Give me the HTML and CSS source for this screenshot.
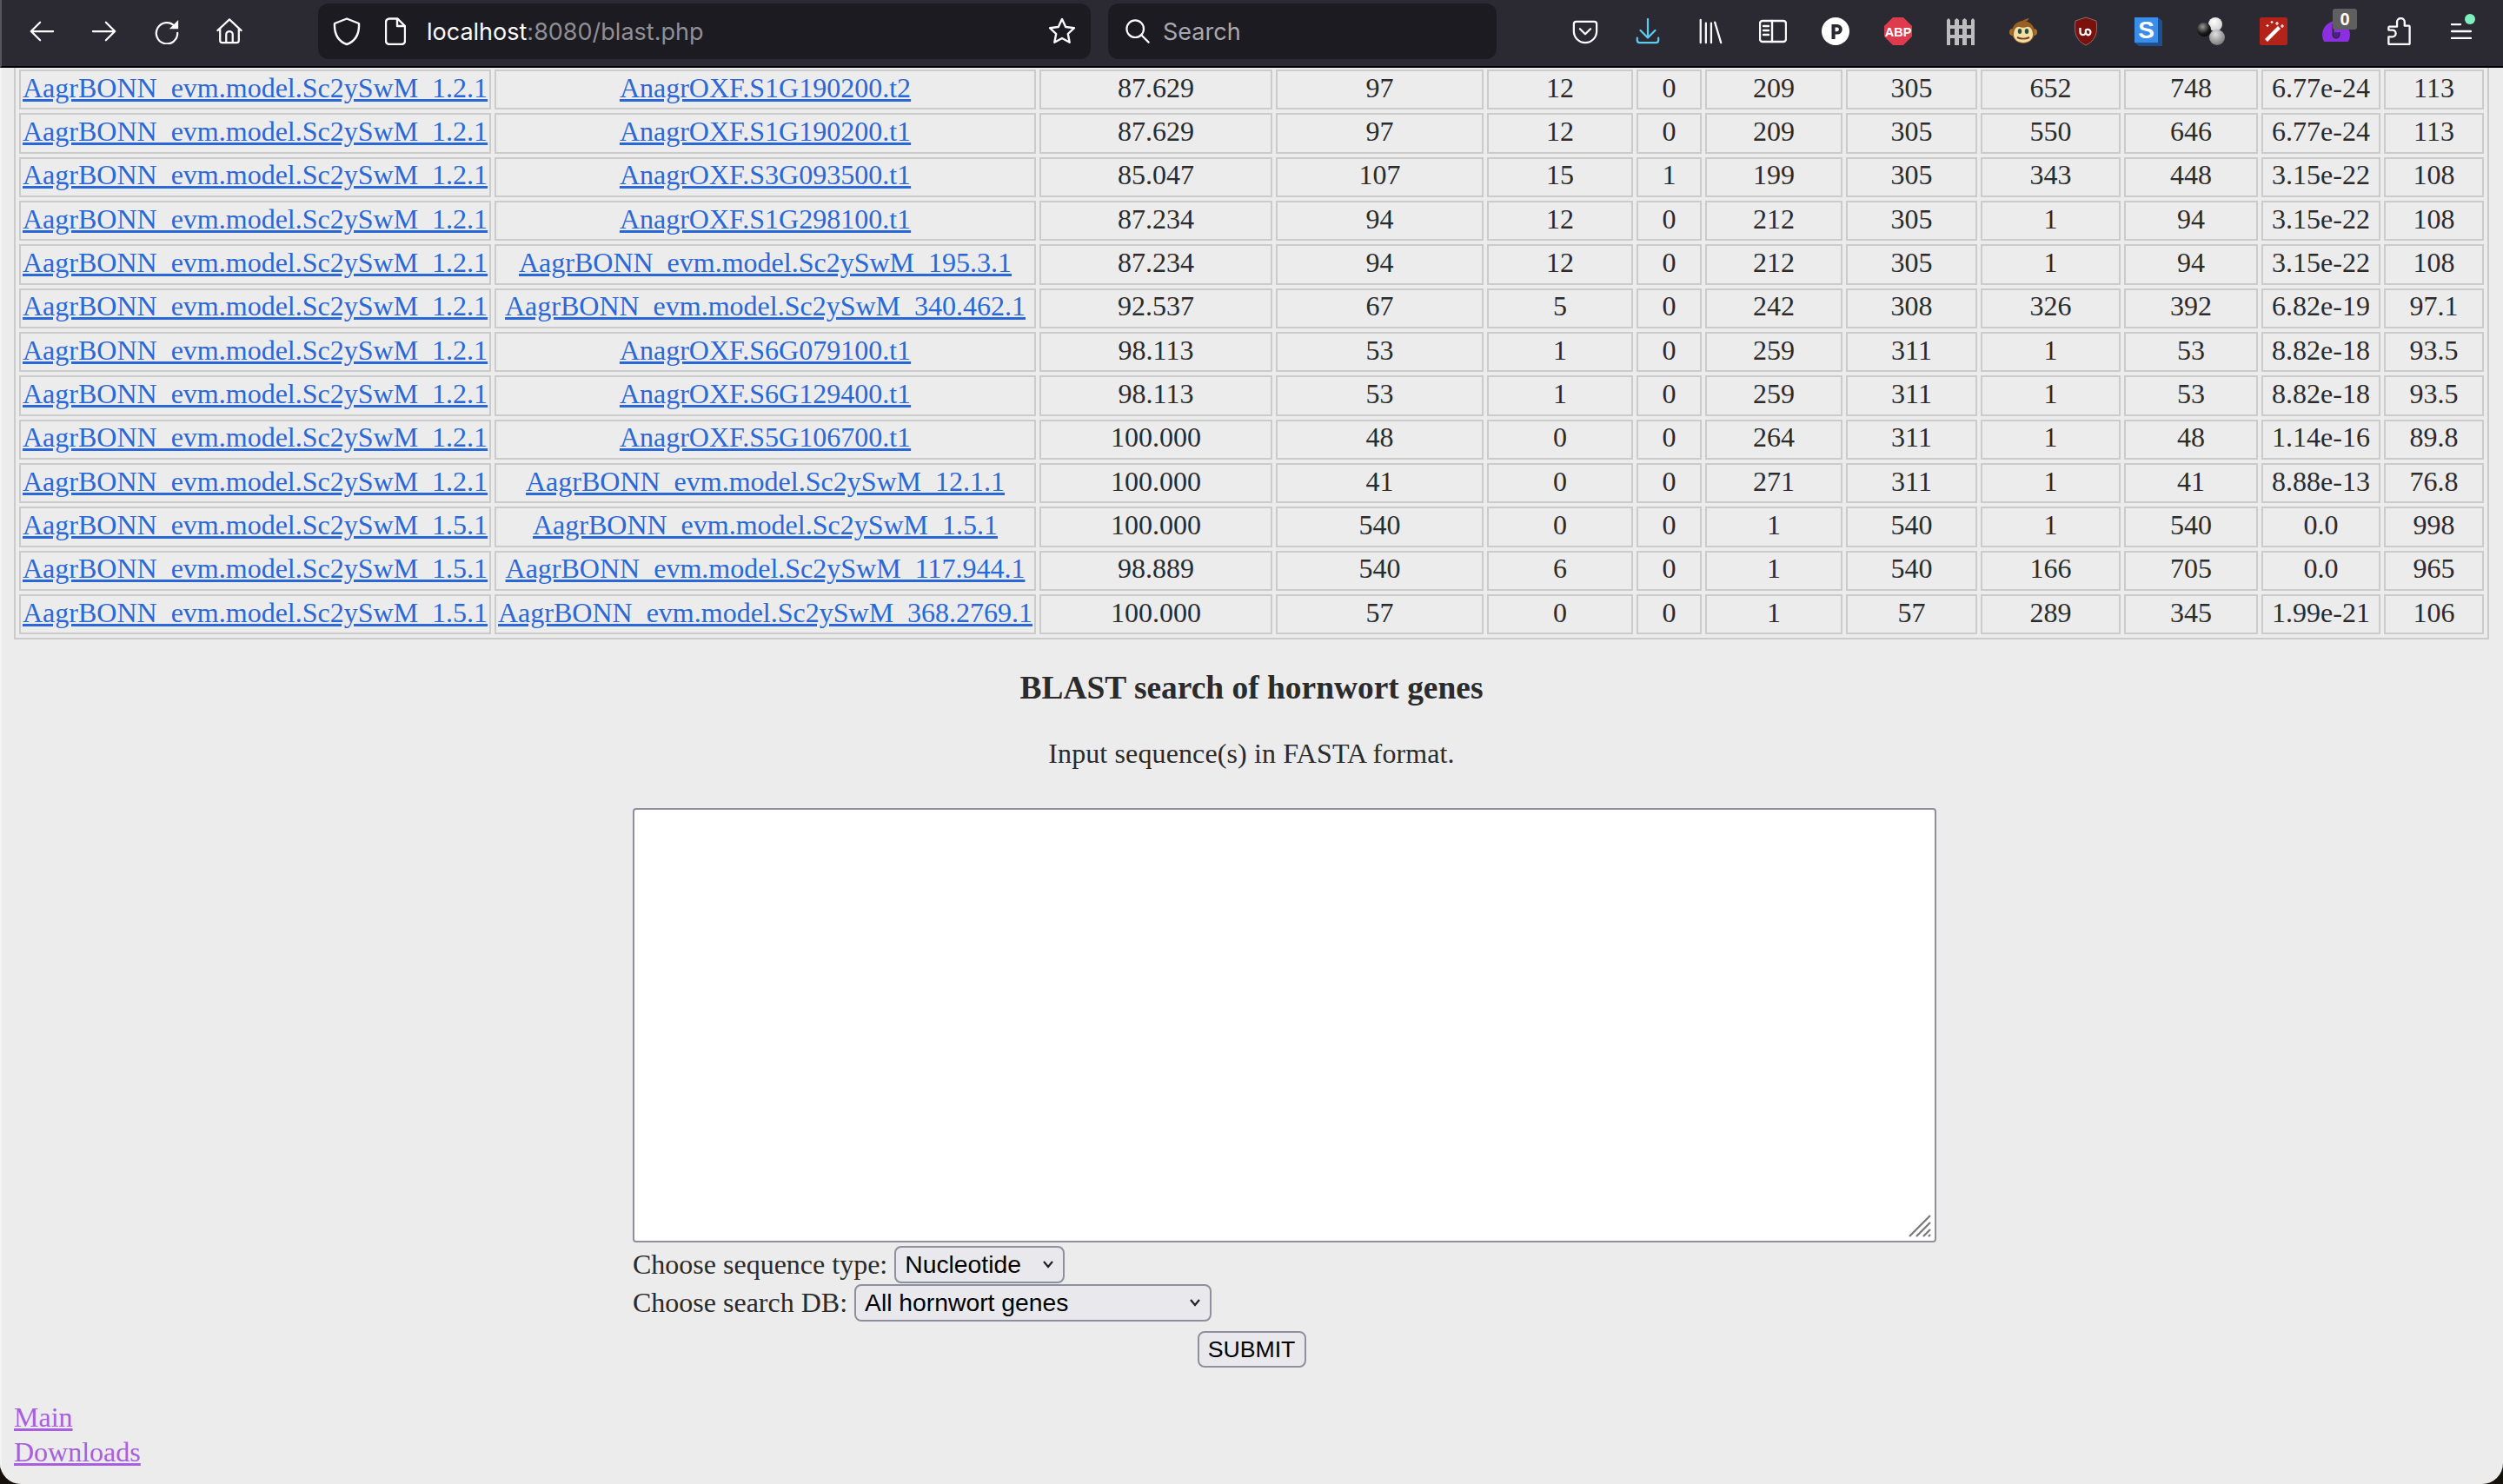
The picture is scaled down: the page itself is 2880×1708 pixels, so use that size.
FILE: index.html
```html
<!DOCTYPE html>
<html lang="en">
<head>
<meta charset="utf-8">
<title>BLAST search of hornwort genes</title>
<link rel="stylesheet" href="styles.css">
</head>
<body>
<div class="window">
  <header class="toolbar">
    <nav class="slots">
      <span class="slot"><svg class="ic" viewBox="0 0 32 32"><path d="M30 16H3M14 5 3 16l11 11"/></svg></span>
      <span class="slot"><svg class="ic" viewBox="0 0 32 32"><path d="M2 16h27M18 5l11 11-11 11"/></svg></span>
      <span class="slot"><svg class="ic" viewBox="0 0 32 32"><path d="M25.500 9.500A13 13 0 1 0 29 18"/><path class="solid" d="M30 2v11H19z"/></svg></span>
      <span class="slot"><svg class="ic" viewBox="0 0 32 32"><path d="M1.500 15 16 1.500 30.500 15M4.500 13v14.500a2.500 2.500 0 0 0 2.500 2.500h18a2.500 2.500 0 0 0 2.500-2.500V13M12 30V20a4 4 0 0 1 8 0v10"/></svg></span>
    </nav>
    <div class="urlbar">
      <svg class="ic shield" viewBox="0 0 32 32"><path d="M16 1.500 30 7c.6 12-3 20-14 24C5 27 1.400 19 2 7z"/></svg>
      <svg class="ic doc" viewBox="0 0 24 32"><path d="M5 1.500h9.500L23 10v17a4 4 0 0 1-4 4H5a4 4 0 0 1-4-4V5.500a4 4 0 0 1 4-4zM14 1.500V10h9"/></svg>
      <span class="url">localhost<span class="url-dim">:8080/blast.php</span></span>
      <svg class="ic star" viewBox="0 0 32 32"><path d="m16 2 4.200 9 9.800 1.200-7.200 6.800 1.900 9.700L16 24l-8.700 4.700L9.200 19 2 12.200 11.800 11z"/></svg>
    </div>
    <div class="searchbar">
      <svg class="ic lens" viewBox="0 0 30 30"><circle cx="12" cy="12" r="10.500"/><path d="m19.500 19.500 9 9"/></svg>
      <span class="search-text">Search</span>
    </div>
    <div class="slots actions">
      <span class="slot"><svg class="ic" viewBox="0 0 32 32"><path d="M5 4h22a3 3 0 0 1 3 3v9a14 14 0 0 1-28 0V7a3 3 0 0 1 3-3zM9.500 13l6.500 6.500 6.500-6.500"/></svg></span>
      <span class="slot"><svg class="ic blue" viewBox="0 0 32 32"><path d="M16 1v23M7 15l9 9 9-9M3 24v3a3 3 0 0 0 3 3h20a3 3 0 0 0 3-3v-3"/></svg></span>
      <span class="slot"><svg class="ic" viewBox="0 0 32 32"><path d="M4 2v28M10.500 6v24M17 6v24M21.500 5 29 30"/></svg></span>
      <span class="slot"><svg class="ic wide" viewBox="0 0 32 26"><rect x="1" y="1" width="30" height="24" rx="3"/><path d="M15 1v24M5 7h6M5 12h6M5 17h6"/></svg></span>
      <span class="slot"><svg class="ext" viewBox="0 0 32 34"><circle cx="16" cy="17" r="16" fill="#fff"/><path d="M11.500 9h6.500a5.800 5.800 0 0 1 0 11.600h-2.400V26h-4.100zm4.100 3.500v4.700h2a2.350 2.350 0 0 0 0-4.700z" fill="#2b2a33"/></svg></span>
      <span class="slot"><svg class="ext" viewBox="0 0 32 34"><path d="M10 1h12l10 10v12L22 33H10L0 23V11z" fill="#df3b4e"/><text x="16" y="22.500" class="abp">ABP</text></svg></span>
      <span class="slot"><svg class="ext" viewBox="0 0 32 34"><path fill="#bdbdbf" d="M0 4l2-2 2 2v29H0zM9 4l2.500-2L14 4v29H9zM18 4l2.500-2L23 4v29h-5zM28 4l2-2 2 2v29h-4zM0 10h32v4H0zM0 21h32v4H0z"/></svg></span>
      <span class="slot"><svg class="ext" viewBox="0 0 32 32"><path d="M14 5c3-3 7-4 9-4-1 1-2 2-2 3z" fill="#a05a22"/><circle cx="4" cy="17" r="4" fill="#a8702e"/><circle cx="28" cy="17" r="4" fill="#a8702e"/><circle cx="16" cy="17" r="13" fill="#9a5f22"/><path d="M5 20c0-7 4-10 7-9 2 1 6 1 8 0 3-1 7 2 7 9 0 5-5 9-11 9S5 25 5 20z" fill="#f1dfa6"/><ellipse cx="12" cy="16" rx="2.200" ry="3" fill="#25503a"/><ellipse cx="20" cy="16" rx="2.200" ry="3" fill="#25503a"/><path d="M9 23c4 2 10 2 14 0" fill="none" stroke="#7a3d14" stroke-width="2"/></svg></span>
      <span class="slot"><svg class="ext" viewBox="0 0 32 34"><path d="M16 1l12 4c2 14-1 23-12 28C5 28 2 19 4 5z" fill="#7a110c" stroke="#8c6b6b"/><path d="M9.500 13v5a3.200 3.200 0 0 0 6.400 0v-2.500a3.400 3.400 0 1 1 3.400 5.800 3.400 3.400 0 0 1-3.400-3.300" fill="none" stroke="#fff" stroke-width="2.200"/></svg></span>
      <span class="slot"><svg class="ext" viewBox="0 0 32 34"><path d="M0 30 5 34H32V5L27 1z" fill="#1e4f8f"/><path d="M0 1h27v29H0z" fill="#3a8eea"/><text x="13.500" y="25" class="sdoc">S</text></svg></span>
      <span class="slot"><svg class="ext" viewBox="0 0 32 32"><defs><radialGradient id="gw" cx=".4" cy=".3" r=".8"><stop offset="0" stop-color="#fff"/><stop offset="1" stop-color="#c9c9c9"/></radialGradient><radialGradient id="gk" cx=".4" cy=".3" r=".8"><stop offset="0" stop-color="#9a9a9a"/><stop offset=".6" stop-color="#1c1c1c"/><stop offset="1" stop-color="#000"/></radialGradient><radialGradient id="gg" cx=".4" cy=".3" r=".8"><stop offset="0" stop-color="#e0e0e0"/><stop offset="1" stop-color="#6e6e6e"/></radialGradient></defs><circle cx="21" cy="8" r="8" fill="url(#gw)"/><circle cx="8" cy="14" r="8" fill="url(#gk)"/><circle cx="23" cy="23" r="9" fill="url(#gg)"/></svg></span>
      <span class="slot"><svg class="ext" viewBox="0 0 32 32"><rect width="32" height="32" rx="2" fill="#b4231a"/><path d="m6 25 15-15 3 3L9 28z" fill="#fff"/><path d="M20 5v4M18 7h4M26 8v4M24 10h4M9 8v3M7.500 9.500h3M14 4v3M12.500 5.500h3" stroke="#fff" stroke-width="1.200"/></svg></span>
      <span class="slot badge-slot"><svg class="ext" viewBox="0 0 32 32"><path d="M2.140 28A16 16 0 1 1 29.860 28z" fill="#8b2fe0"/><path d="M12.500 8v12a3.500 3.500 0 0 0 7 0v-3" fill="none" stroke="#2b2a33" stroke-width="2"/><circle cx="16" cy="20" r="3" fill="#4c1f8a"/></svg><span class="badge">0</span></span>
      <span class="slot"><svg class="ic wide" viewBox="0 0 28 33"><path d="M12 5.500a4.500 4.500 0 0 1 9 0V10h5a1 1 0 0 1 1 1v20a1 1 0 0 1-1 1H3a1 1 0 0 1-1-1v-8h4.500a4 4 0 0 0 0-8H2v-3a1 1 0 0 1 1-1h9z"/></svg></span>
      <span class="slot menu-slot"><svg class="ic menu" viewBox="0 0 24 18"><path d="M1 1h10M1 9h22M1 17h22"/></svg><span class="dot"></span></span>
    </div>
  </header>

  <main class="page">
    <table class="results">
      <colgroup>
        <col class="c1"><col class="c2"><col class="c3"><col class="c4"><col class="c5"><col class="c6"><col class="c7"><col class="c8"><col class="c9"><col class="c10"><col class="c11"><col class="c12">
      </colgroup>
      <tbody>
        <tr><td><a href="#">AagrBONN_evm.model.Sc2ySwM_1.2.1</a></td><td><a href="#">AnagrOXF.S1G190200.t2</a></td><td>87.629</td><td>97</td><td>12</td><td>0</td><td>209</td><td>305</td><td>652</td><td>748</td><td>6.77e-24</td><td>113</td></tr>
        <tr><td><a href="#">AagrBONN_evm.model.Sc2ySwM_1.2.1</a></td><td><a href="#">AnagrOXF.S1G190200.t1</a></td><td>87.629</td><td>97</td><td>12</td><td>0</td><td>209</td><td>305</td><td>550</td><td>646</td><td>6.77e-24</td><td>113</td></tr>
        <tr><td><a href="#">AagrBONN_evm.model.Sc2ySwM_1.2.1</a></td><td><a href="#">AnagrOXF.S3G093500.t1</a></td><td>85.047</td><td>107</td><td>15</td><td>1</td><td>199</td><td>305</td><td>343</td><td>448</td><td>3.15e-22</td><td>108</td></tr>
        <tr><td><a href="#">AagrBONN_evm.model.Sc2ySwM_1.2.1</a></td><td><a href="#">AnagrOXF.S1G298100.t1</a></td><td>87.234</td><td>94</td><td>12</td><td>0</td><td>212</td><td>305</td><td>1</td><td>94</td><td>3.15e-22</td><td>108</td></tr>
        <tr><td><a href="#">AagrBONN_evm.model.Sc2ySwM_1.2.1</a></td><td><a href="#">AagrBONN_evm.model.Sc2ySwM_195.3.1</a></td><td>87.234</td><td>94</td><td>12</td><td>0</td><td>212</td><td>305</td><td>1</td><td>94</td><td>3.15e-22</td><td>108</td></tr>
        <tr><td><a href="#">AagrBONN_evm.model.Sc2ySwM_1.2.1</a></td><td><a href="#">AagrBONN_evm.model.Sc2ySwM_340.462.1</a></td><td>92.537</td><td>67</td><td>5</td><td>0</td><td>242</td><td>308</td><td>326</td><td>392</td><td>6.82e-19</td><td>97.1</td></tr>
        <tr><td><a href="#">AagrBONN_evm.model.Sc2ySwM_1.2.1</a></td><td><a href="#">AnagrOXF.S6G079100.t1</a></td><td>98.113</td><td>53</td><td>1</td><td>0</td><td>259</td><td>311</td><td>1</td><td>53</td><td>8.82e-18</td><td>93.5</td></tr>
        <tr><td><a href="#">AagrBONN_evm.model.Sc2ySwM_1.2.1</a></td><td><a href="#">AnagrOXF.S6G129400.t1</a></td><td>98.113</td><td>53</td><td>1</td><td>0</td><td>259</td><td>311</td><td>1</td><td>53</td><td>8.82e-18</td><td>93.5</td></tr>
        <tr><td><a href="#">AagrBONN_evm.model.Sc2ySwM_1.2.1</a></td><td><a href="#">AnagrOXF.S5G106700.t1</a></td><td>100.000</td><td>48</td><td>0</td><td>0</td><td>264</td><td>311</td><td>1</td><td>48</td><td>1.14e-16</td><td>89.8</td></tr>
        <tr><td><a href="#">AagrBONN_evm.model.Sc2ySwM_1.2.1</a></td><td><a href="#">AagrBONN_evm.model.Sc2ySwM_12.1.1</a></td><td>100.000</td><td>41</td><td>0</td><td>0</td><td>271</td><td>311</td><td>1</td><td>41</td><td>8.88e-13</td><td>76.8</td></tr>
        <tr><td><a href="#">AagrBONN_evm.model.Sc2ySwM_1.5.1</a></td><td><a href="#">AagrBONN_evm.model.Sc2ySwM_1.5.1</a></td><td>100.000</td><td>540</td><td>0</td><td>0</td><td>1</td><td>540</td><td>1</td><td>540</td><td>0.0</td><td>998</td></tr>
        <tr><td><a href="#">AagrBONN_evm.model.Sc2ySwM_1.5.1</a></td><td><a href="#">AagrBONN_evm.model.Sc2ySwM_117.944.1</a></td><td>98.889</td><td>540</td><td>6</td><td>0</td><td>1</td><td>540</td><td>166</td><td>705</td><td>0.0</td><td>965</td></tr>
        <tr><td><a href="#">AagrBONN_evm.model.Sc2ySwM_1.5.1</a></td><td><a href="#">AagrBONN_evm.model.Sc2ySwM_368.2769.1</a></td><td>100.000</td><td>57</td><td>0</td><td>0</td><td>1</td><td>57</td><td>289</td><td>345</td><td>1.99e-21</td><td>106</td></tr>
      </tbody>
    </table>

    <h3 class="title">BLAST search of hornwort genes</h3>
    <p class="hint">Input sequence(s) in FASTA format.</p>

    <form class="blast-form">
      <div class="fields">
        <div class="seq-wrap">
          <textarea class="seq"></textarea>
          <svg class="grip" viewBox="0 0 26 26"><path d="M1 25 25 1M9 25 25 9M17 25l8-8M23 25l2-2"/></svg>
        </div>
        <div class="field"><label>Choose sequence type:</label><select class="ctl sel-type"><option>Nucleotide</option></select></div>
        <div class="field"><label>Choose search DB:</label><select class="ctl sel-db"><option>All hornwort genes</option></select></div>
      </div>
      <div class="submit-row"><button class="ctl submit" type="button">SUBMIT</button></div>
    </form>

    <div class="footer-links">
      <a class="visited" href="#">Main</a>
      <a class="visited" href="#">Downloads</a>
    </div>
  </main>
</div>
</body>
</html>
```

FILE: styles.css
```css
* { box-sizing: border-box; }
html, body { margin: 0; height: 100%; }
body { background: #15100c; overflow: hidden; }

.window {
  width: 2880px;
  height: 1708px;
  background: #ececec;
  border-radius: 0 0 24px 24px;
  overflow: hidden;
  color: #2b2b2b;
  font-family: "Liberation Serif", "Times New Roman", serif;
  font-size: 32px;
}

/* Browser toolbar */
.toolbar {
  position: relative;
  z-index: 2;
  display: flex;
  align-items: center;
  height: 78px;
  padding: 4px 12px 8px 10px;
  background: #2b2a33;
  border-left: 2px solid #56555c;
  border-bottom: 2px solid #000;
}
.slots { display: flex; flex: none; }
.slot {
  position: relative;
  display: flex;
  align-items: center;
  justify-content: center;
  width: 72px;
  height: 64px;
}
.ic {
  width: 30px;
  height: 30px;
  fill: none;
  stroke: #fbfbfe;
  stroke-width: 2.400;
  stroke-linecap: round;
  stroke-linejoin: round;
}
.ic .solid { fill: #fbfbfe; stroke: none; }
.ic.blue { stroke: #5ccbf0; }
.ic.wide { width: 32px; height: 32px; }
.ic.menu { width: 24px; height: 18px; }
.ext { display: block; width: 32px; height: 34px; }
.abp { font: 700 14.500px "Liberation Sans", sans-serif; fill: #fff; text-anchor: middle; }
.sdoc { font: 700 28px "Liberation Sans", sans-serif; fill: #fff; text-anchor: middle; }

.urlbar, .searchbar {
  display: flex;
  align-items: center;
  height: 64px;
  background: #1c1b22;
  border-radius: 12px;
  font-family: "Inter", "Liberation Sans", sans-serif;
  font-size: 27px;
}
.urlbar { width: 889px; margin-left: 66px; padding: 0 17px; }
.searchbar { width: 447px; margin-left: 20px; padding: 0 20px; }
.actions { margin-left: 66px; }
.shield { flex: none; width: 32px; height: 34px; }
.doc { flex: none; width: 24px; height: 32px; margin-left: 28px; }
.url { margin-left: 24px; color: #fbfbfe; flex: 1; }
.url-dim { color: #8f8f94; }
.star { flex: none; width: 32px; height: 32px; }
.lens { flex: none; width: 28px; height: 28px; }
.search-text { margin-left: 15px; color: #a9a9ad; }

.badge {
  position: absolute;
  left: 32px;
  top: 6px;
  width: 28px;
  height: 24px;
  border-radius: 3px;
  background: #5f5f61;
  color: #fff;
  font: 700 20px/24px "Liberation Sans", sans-serif;
  text-align: center;
}
.dot {
  position: absolute;
  left: 40px;
  top: 12px;
  width: 12px;
  height: 12px;
  border-radius: 50%;
  background: #7ff0bd;
}

/* Page */
.page { padding: 0 16px 0 14px; border-left: 2px solid #f3f3f3; }
a { color: #2a68d8; }

.results {
  width: 2848px;
  table-layout: fixed;
  margin-top: -2px;
  border: 2px solid #cbcbcb;
  border-top: 0;
  border-collapse: separate;
  border-spacing: 4px;
}
.results td {
  height: 46.330px;
  padding: 0 2px 5px;
  border: 2px solid #cbcbcb;
  text-align: center;
  white-space: nowrap;
  line-height: 36px;
  overflow: visible;
}
.c1 { width: 543px; } .c2 { width: 623px; } .c3 { width: 268px; } .c4 { width: 239px; }
.c5 { width: 168px; } .c6 { width: 75px; } .c7 { width: 158px; } .c8 { width: 151px; }
.c9 { width: 161px; } .c10 { width: 154px; } .c11 { width: 137px; } .c12 { width: 115px; }

.title {
  margin: 34px 0 0;
  font-size: 37.440px;
  line-height: 43px;
  text-align: center;
}
.hint { margin: 36px 0 0; line-height: 37px; text-align: center; letter-spacing: .12px; }

.blast-form { margin-top: 44px; }
.fields { width: 1500px; margin-left: 712px; }
.seq-wrap { position: relative; height: 500px; }
.seq {
  display: block;
  width: 1500px;
  height: 500px;
  border: 2px solid #8f8f9d;
  border-radius: 4px;
  background: #fff;
  resize: none;
}
.grip {
  position: absolute;
  right: 6px;
  bottom: 6px;
  width: 26px;
  height: 26px;
  fill: none;
  stroke: #7c7c7c;
  stroke-width: 2.400;
}
.field { display: flex; align-items: center; gap: 8px; height: 44px; }
.seq-wrap + .field { margin-top: 3px; }
.ctl {
  border: 2px solid #8f8f9d;
  border-radius: 8px;
  background-color: #e9e9ed;
  color: #000;
  font: 26.670px "Liberation Sans", Arial, sans-serif;
}
select.ctl {
  appearance: none;
  height: 43px;
  padding: 0 36px 0 10px;
  font-size: 28.300px;
  background-image: url("data:image/svg+xml,%3Csvg xmlns='http://www.w3.org/2000/svg' viewBox='0 0 14 10'%3E%3Cpath d='M2 2l5 6 5-6' fill='none' stroke='%23222' stroke-width='2.200'/%3E%3C/svg%3E");
  background-repeat: no-repeat;
  background-position: right 10px center;
  background-size: 14px 10px;
}
.sel-type { width: 196px; }
.sel-db { width: 411px; }
.submit-row { margin-top: 11px; text-align: center; }
.submit { width: 125px; height: 42px; padding: 0; }

.footer-links { margin-top: 38px; line-height: 39.500px; }
.footer-links a { display: block; width: max-content; }
a.visited { color: #a75fe0; }
```
